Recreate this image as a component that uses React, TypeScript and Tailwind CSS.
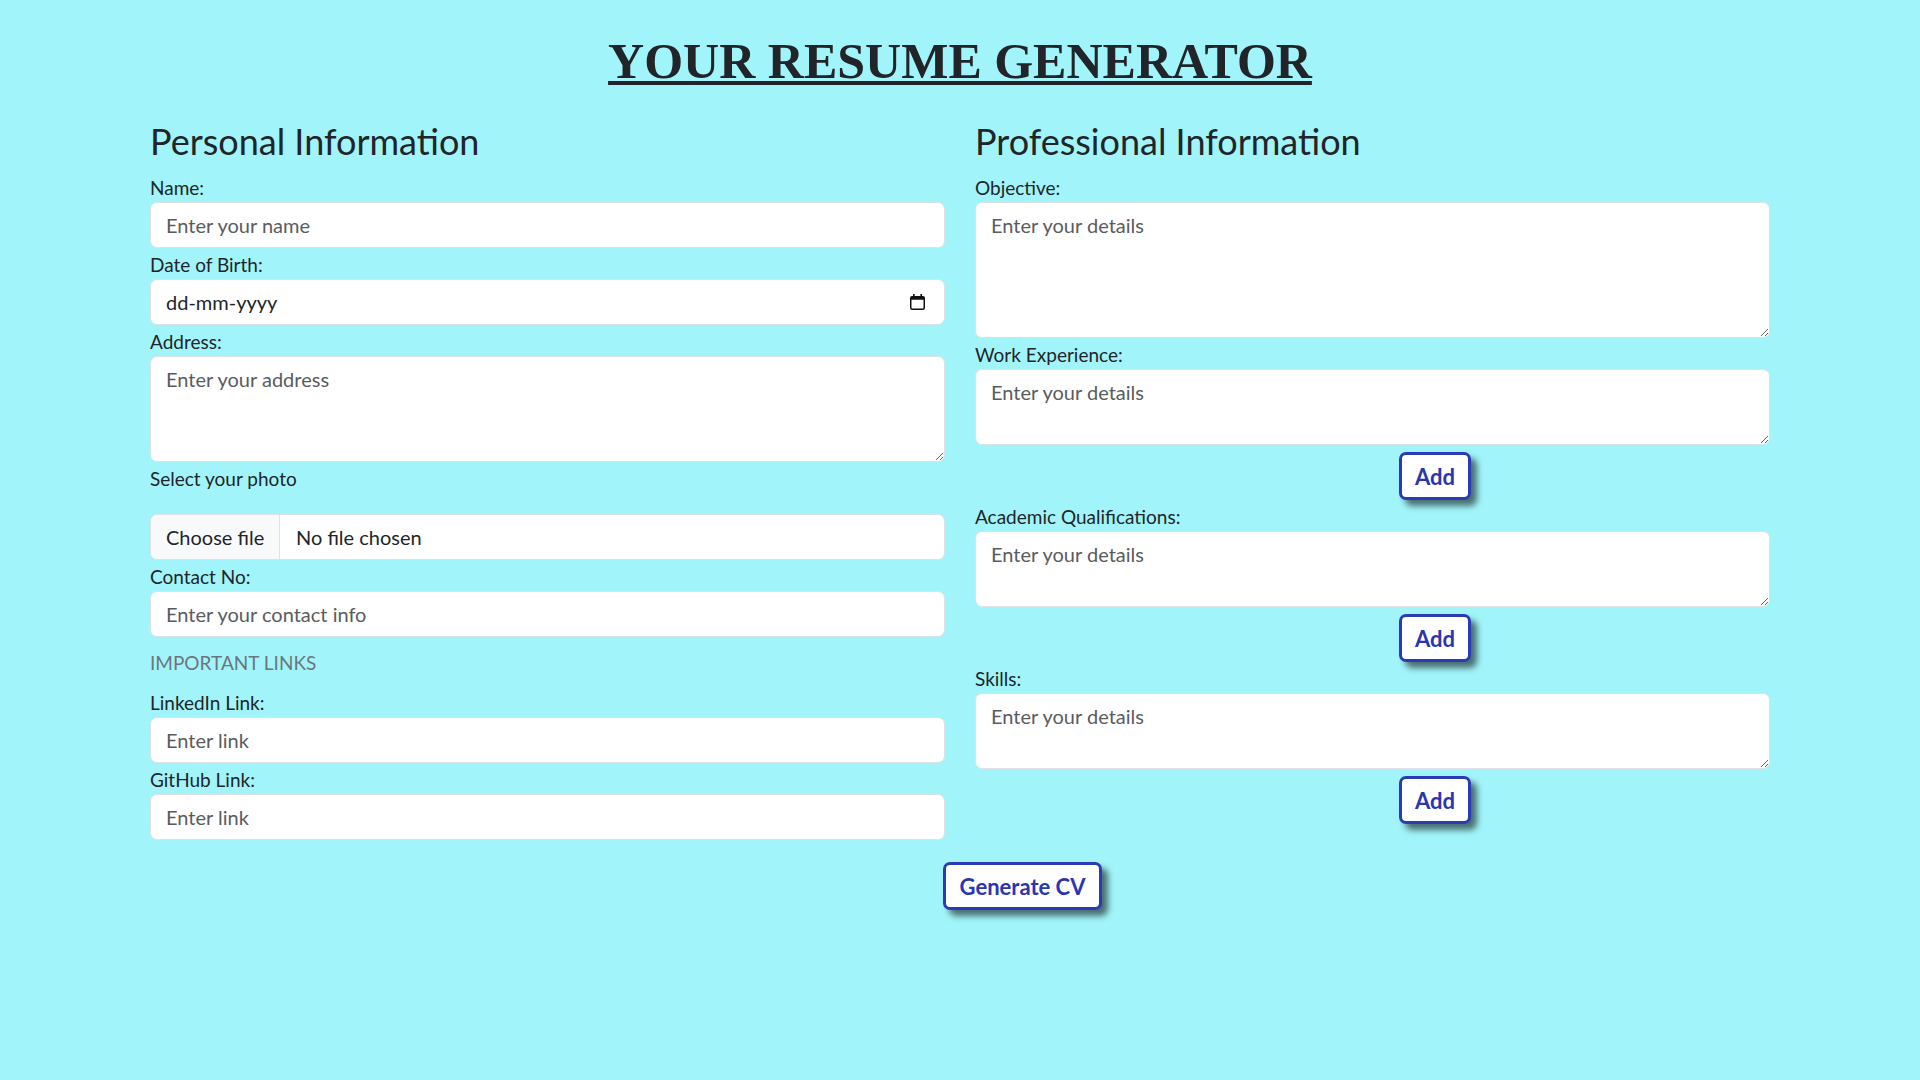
// Resume generator form
const labelCls = "block pb-[1px] pt-[3px] text-[19px] leading-[27px] text-[#212529]";
const inputCls =
  "block h-[46px] w-full rounded-[7px] border border-[#dee2e6] bg-white px-[15px] text-[20px] text-[#212529] outline-none placeholder:text-[#595c5f]";
const areaCls =
  "block w-full rounded-[7px] border border-[#dee2e6] bg-white px-[15px] py-[7px] text-[20px] leading-[30px] text-[#212529] outline-none placeholder:text-[#595c5f]";
const btnCls =
  "flex h-[48px] items-center justify-center rounded-[7px] border-[3px] border-[#2b3ab5] bg-white text-[22px] font-bold text-[#2b35b0] shadow-[6px_6px_6px_rgba(0,0,0,0.55)]";

function CalendarIcon() {
  return (
    <svg width="15" height="16" viewBox="0 0 15 16" fill="none">
      <rect x="3" y="0" width="1.6" height="2.5" fill="#111" />
      <rect x="10.4" y="0" width="1.6" height="2.5" fill="#111" />
      <rect x="0.75" y="2.75" width="13.5" height="12.5" rx="1.5" stroke="#111" strokeWidth="1.5" />
      <rect x="0.75" y="2.75" width="13.5" height="3" fill="#111" />
    </svg>
  );
}

function AreaField({ label, height }: { label: string; height: string }) {
  return (
    <>
      <label className={labelCls}>{label}</label>
      <textarea className={`${areaCls} ${height}`} placeholder="Enter your details" />
    </>
  );
}

function AddButton() {
  return (
    <div className="pt-[7px]">
      <button className={`${btnCls} ml-[424px] w-[72px]`}>Add</button>
    </div>
  );
}

export default function App() {
  return (
    <div className="min-h-screen bg-[#a1f5fa] font-['Lato','Segoe_UI',sans-serif] text-[#212529]">
      <h1 className="pt-[31px] text-center font-['Liberation_Serif','Times_New_Roman',serif] text-[50px] font-bold leading-[60px] text-[#212529] underline decoration-[4px] underline-offset-[3px]">
        YOUR RESUME GENERATOR
      </h1>

      <div className="mx-auto w-[1620px]">
        <div className="grid grid-cols-2 gap-x-[30px] pt-[27px]">
          {/* left column */}
          <div>
            <h3 className="mb-[8px] pt-[2px] text-[36px] leading-[43px]">Personal Information</h3>
            <label className={labelCls}>Name:</label>
            <input className={inputCls} placeholder="Enter your name" />
            <label className={labelCls}>Date of Birth:</label>
            <div className="flex h-[46px] w-full items-center justify-between rounded-[7px] border border-[#dee2e6] bg-white pl-[15px] pr-[19px] text-[20px]">
              <span>dd-mm-yyyy</span>
              <CalendarIcon />
            </div>
            <label className={labelCls}>Address:</label>
            <textarea className={`${areaCls} h-[106px]`} placeholder="Enter your address" />
            <label className={labelCls}>Select your photo</label>
            <div className="mt-[21px] flex h-[46px] w-full overflow-hidden rounded-[7px] border border-[#dee2e6] bg-white text-[20px]">
              <div className="flex w-[129px] items-center border-r border-[#dee2e6] bg-[#f8f9fa] pl-[15px]">Choose file</div>
              <div className="flex items-center pl-[16px]">No file chosen</div>
            </div>
            <label className={labelCls}>Contact No:</label>
            <input className={inputCls} placeholder="Enter your contact info" />
            <p className="mb-[9px] mt-[9px] pb-[1px] pt-[3px] text-[19px] leading-[27px] text-[#6c757d]">IMPORTANT LINKS</p>
            <label className={labelCls}>LinkedIn Link:</label>
            <input className={inputCls} placeholder="Enter link" />
            <label className={labelCls}>GitHub Link:</label>
            <input className={inputCls} placeholder="Enter link" />
          </div>

          {/* right column */}
          <div>
            <h3 className="mb-[8px] pt-[2px] text-[36px] leading-[43px]">Professional Information</h3>
            <AreaField label="Objective:" height="h-[136px]" />
            <AreaField label="Work Experience:" height="h-[76px]" />
            <AddButton />
            <AreaField label="Academic Qualifications:" height="h-[76px]" />
            <AddButton />
            <AreaField label="Skills:" height="h-[76px]" />
            <AddButton />
          </div>
        </div>

        <div className="pt-[22px]">
          <button className={`${btnCls} ml-[793px] w-[159px]`}>Generate CV</button>
        </div>
      </div>
    </div>
  );
}
